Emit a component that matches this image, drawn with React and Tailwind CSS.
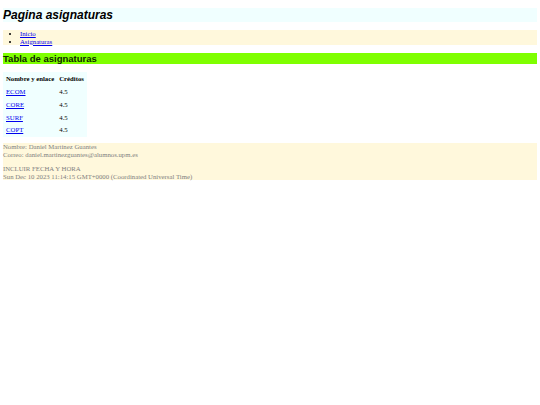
export default function App() {
  const rows = ["ECOM", "CORE", "SURF", "COPT"];
  return (
    <div className="bg-white min-h-[405px] px-[3px] pt-[8px] text-[6.75px] leading-[7.7px] text-black" style={{ fontFamily: '"Liberation Serif", serif' }}>
      <h1 className="bg-[#f0ffff] text-[12px] leading-[14px] font-bold italic" style={{ fontFamily: '"Liberation Sans", Arial, sans-serif' }}>
        Pagina asignaturas
      </h1>
      <ul className="mt-[8px] bg-[#fff8dc] list-disc pl-[17px]">
        <li><a href="#" className="text-[#0000ee] underline">Inicio</a></li>
        <li><a href="#" className="text-[#0000ee] underline">Asignaturas</a></li>
      </ul>
      <h2 className="mt-[8px] bg-[#7fff00] text-[9.5px] leading-[11px] font-bold text-[#0d2600]" style={{ fontFamily: '"Liberation Sans", Arial, sans-serif' }}>
        Tabla de asignaturas
      </h2>
      <table className="mt-[8px] bg-[#f0ffff] border-separate border-spacing-[1px]">
        <thead>
          <tr>
            <th className="text-left font-bold px-[2px] py-[2px]">Nombre y enlace</th>
            <th className="text-left font-bold px-[2px] py-[2px]">Créditos</th>
          </tr>
        </thead>
        <tbody>
          {rows.map((r) => (
            <tr key={r}>
              <td className="px-[2px] py-[2px]"><a href="#" className="text-[#0000ee] underline">{r}</a></td>
              <td className="px-[2px] py-[2px]">4.5</td>
            </tr>
          ))}
        </tbody>
      </table>
      <footer className="mt-[6px] bg-[#fff8dc] text-[#808080]">
        <p>Nombre: Daniel Martínez Guantes<br />Correo: daniel.martinezguantes@alumnos.upm.es</p>
        <p className="mt-[6.7px]">INCLUIR FECHA Y HORA<br />Sun Dec 10 2023 11:14:15 GMT+0000 (Coordinated Universal Time)</p>
      </footer>
    </div>
  );
}
